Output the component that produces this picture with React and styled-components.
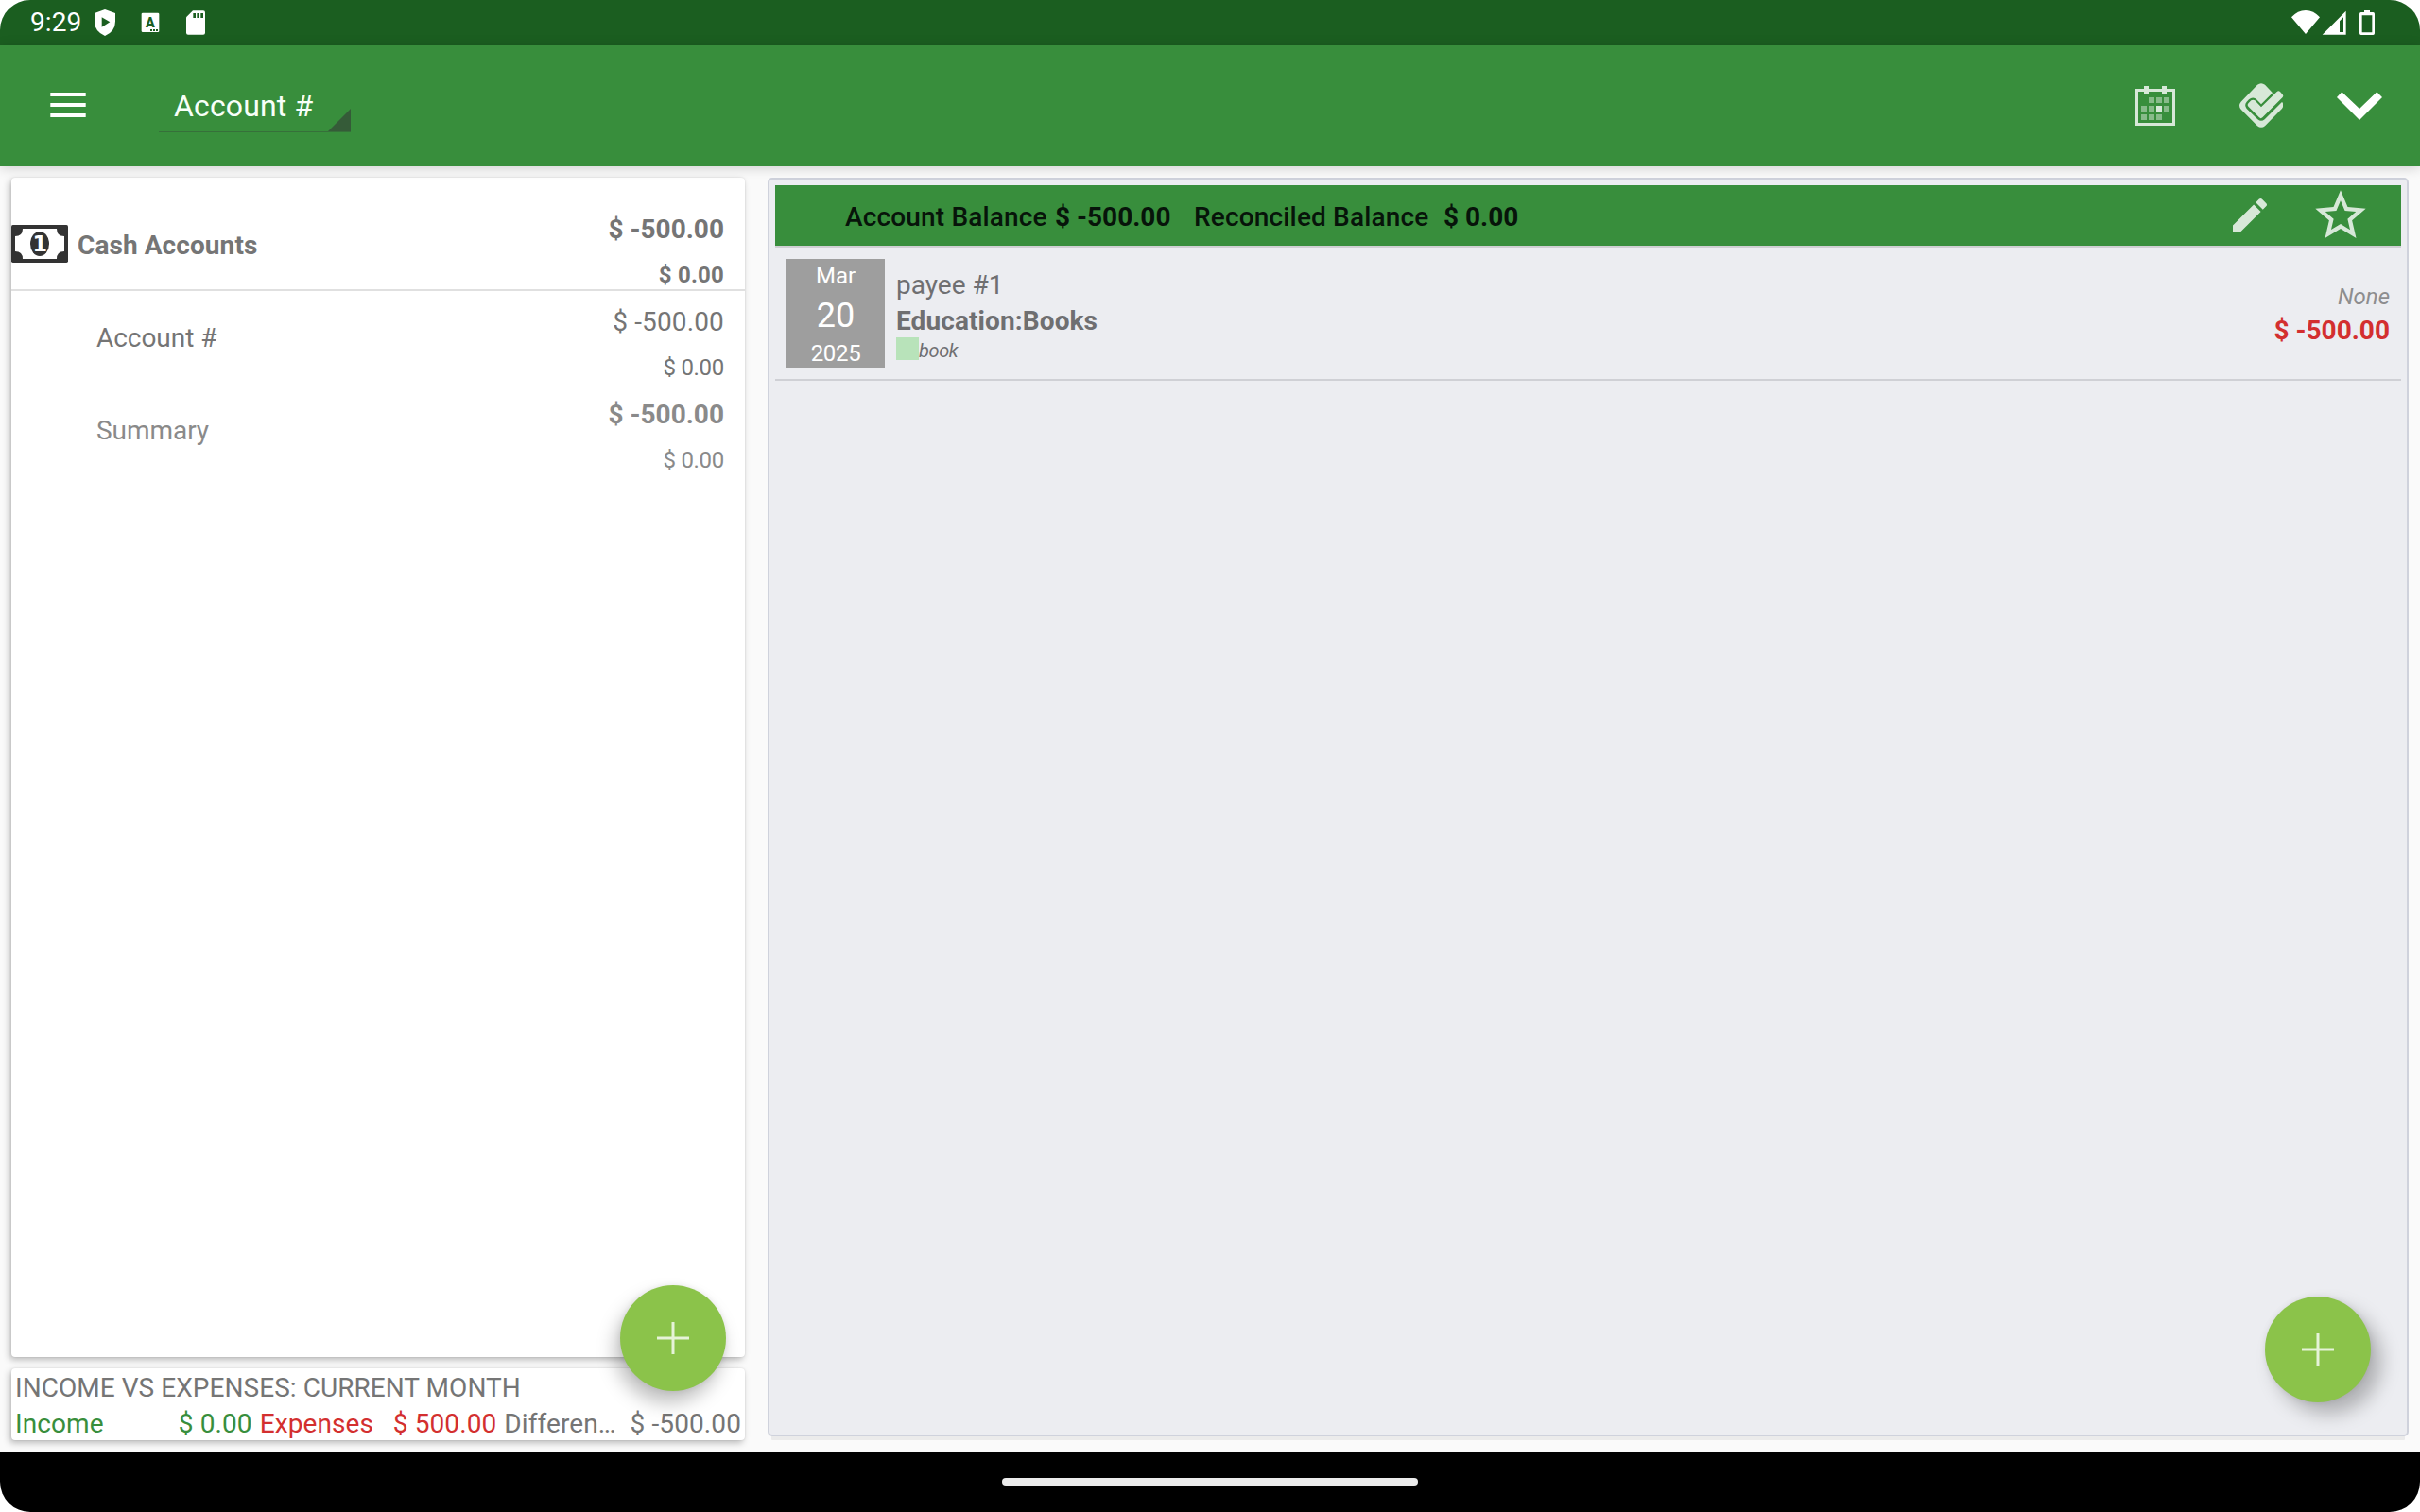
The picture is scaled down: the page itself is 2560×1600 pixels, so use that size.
import React from "react";
import styled, { createGlobalStyle } from "styled-components";

const GlobalStyle = createGlobalStyle`
  * { box-sizing: border-box; }
  html, body { margin: 0; padding: 0; background: #ffffff; }
  body { font-family: Roboto, "Noto Sans", sans-serif; overflow: hidden; }
  svg { display: block; flex: none; }
`;

const Device = styled.div`
  width: 2560px;
  height: 1600px;
  display: flex;
  flex-direction: column;
  border-radius: 32px;
  overflow: hidden;
  background: #fafafa;
`;

const StatusBar = styled.header`
  height: 48px;
  flex: none;
  display: flex;
  justify-content: space-between;
  background: #1b5e20;
  color: #ffffff;
`;

const StatusLeft = styled.div`
  display: flex;
  padding-left: 32px;
`;

const StatusRight = styled.div`
  display: flex;
  padding-right: 48px;
`;

const Clock = styled.span`
  width: 68px;
  padding-top: 7px;
  font-size: 28px;
  line-height: 33px;
  letter-spacing: 0.1px;
`;

const Toolbar = styled.nav`
  height: 128px;
  flex: none;
  display: flex;
  align-items: flex-start;
  background: #388e3c;
  box-shadow: 0 2px 12px rgba(0, 0, 0, 0.17);
  z-index: 1;
`;

const MenuButton = styled.div`
  padding: 50px 0 0 53px;
  width: 168px;
`;

const Spinner = styled.div`
  width: 203px;
  height: 49px;
  margin-top: 43px;
  display: flex;
  justify-content: space-between;
  align-items: flex-end;
  border-bottom: 1px solid #36703a;
`;

const SpinnerText = styled.span`
  padding: 0 0 8px 16px;
  color: #f8fff8;
  font-size: 32px;
  line-height: 38px;
  letter-spacing: 0.15px;
  white-space: nowrap;
`;

const ToolbarActions = styled.div`
  margin-left: auto;
  display: flex;
  padding: 40px 40px 0 0;
`;

const Main = styled.main`
  flex: 1;
  display: flex;
  gap: 24px;
  padding: 12px 12px 12px;
`;

const Sidebar = styled.section`
  position: relative;
  width: 776px;
  display: flex;
  flex-direction: column;
  gap: 12px;
`;

const Card = styled.div`
  background: #ffffff;
  border-radius: 4px;
  box-shadow: -2px 3px 7px rgba(0, 0, 0, 0.26), 0 0 2px rgba(0, 0, 0, 0.12);
`;

const AccountsCard = styled(Card)`
  flex: 1;
  padding-top: 22px;
`;

const AccountRow = styled.div`
  height: 98px;
  display: flex;
  padding-right: 22px;
  color: ${(p) => p.$color || "#757575"};
  border-bottom: ${(p) => (p.$header ? "2px solid #e0e0e0" : "none")};
`;

const BillSlot = styled.div`
  width: 60px;
  padding-top: 28px;
`;

const AccountName = styled.span`
  flex: 1;
  padding-top: 33px;
  padding-left: ${(p) => (p.$header ? "10px" : "90px")};
  font-size: 28px;
  line-height: 33px;
  font-weight: ${(p) => (p.$header ? 700 : 400)};
  letter-spacing: ${(p) => (p.$header ? 0.08 : -0.05)}px;
`;

const Amounts = styled.div`
  display: flex;
  flex-direction: column;
  align-items: flex-end;
  gap: 18px;
  padding-top: 16px;
`;

const Amount = styled.span`
  font-size: ${(p) => (p.$small ? 24 : 28)}px;
  line-height: ${(p) => (p.$small ? 28 : 33)}px;
  font-weight: ${(p) => (p.$bold ? 700 : 400)};
  letter-spacing: ${(p) => (p.$small ? (p.$bold ? 0.2 : -0.3) : p.$bold ? 0 : 0.15)}px;
`;

const SummaryCard = styled(Card)`
  height: 76px;
  flex: none;
  padding-top: 4px;
  color: #757575;
  font-size: 28px;
`;

const SummaryTitle = styled.div`
  height: 38px;
  padding-left: 4px;
  line-height: 33px;
  letter-spacing: 0.05px;
`;

const SummaryColumns = styled.div`
  display: grid;
  grid-template-columns: repeat(3, 1fr);
  line-height: 33px;
`;

const SummaryCell = styled.div`
  min-width: 0;
  display: flex;
  justify-content: space-between;
  padding: 0 4px;
  white-space: nowrap;
  letter-spacing: 0.1px;
  color: ${(p) => p.$color};
`;

const Ledger = styled.section`
  position: relative;
  flex: 1;
  margin-bottom: 4px;
  padding: 6px;
  background: #ecedf1;
  border: 2px solid #cfd2dc;
  border-radius: 5px;
  box-shadow: 0 8px 0 -4px #ebebeb;
`;

const LedgerHeader = styled.div`
  height: 66px;
  display: flex;
  padding: 17px 32px 0 74px;
  background: #388e3c;
  border-bottom: 2px solid #cfcfd3;
  color: #07140a;
  font-size: 28px;
  line-height: 33px;
  white-space: nowrap;
`;

const BalanceLabel = styled.span`
  width: ${(p) => p.$width}px;
  font-weight: 500;
  letter-spacing: 0.16px;
`;

const BalanceValue = styled.span`
  width: ${(p) => p.$width}px;
  font-weight: 700;
`;

const HeaderActions = styled.div`
  margin: -17px 0 0 auto;
  display: flex;
  gap: 40px;
  align-items: center;
  height: 64px;
`;

const Transaction = styled.div`
  height: 141px;
  display: flex;
  padding: 0 12px;
  border-bottom: 2px solid #cfd0d5;
  color: #6f6f71;
`;

const DateTile = styled.div`
  width: 104px;
  height: 115px;
  margin: 12px 12px 0 0;
  padding-top: 4px;
  display: flex;
  flex-direction: column;
  align-items: center;
  background: #9e9e9e;
  color: #ffffff;
  font-size: 24px;
  line-height: 28px;
`;

const Day = styled.span`
  margin: 7px 0 5px;
  font-size: 36px;
  line-height: 42px;
`;

const Year = styled.span`
  letter-spacing: -0.35px;
`;

const Details = styled.div`
  padding-top: 23px;
  display: flex;
  flex-direction: column;
  font-size: 28px;
  line-height: 33px;
`;

const Category = styled.span`
  margin: 5px 0 1px;
  font-weight: 700;
  letter-spacing: 0.1px;
`;

const TagLine = styled.div`
  display: flex;
`;

const Swatch = styled.span`
  width: 24px;
  height: 24px;
  background: #b8e3ba;
`;

const Note = styled.span`
  padding-top: 2px;
  font-size: 20px;
  line-height: 24px;
  font-style: italic;
  letter-spacing: -0.4px;
`;

const TransactionTotals = styled.div`
  margin-left: auto;
  padding-top: 38px;
  display: flex;
  flex-direction: column;
  align-items: flex-end;
  gap: 5px;
`;

const StatusText = styled.span`
  color: #8d8d8f;
  font-size: 24px;
  line-height: 28px;
  font-style: italic;
`;

const NegativeAmount = styled.span`
  color: #d32f2f;
  font-size: 28px;
  line-height: 33px;
  font-weight: 700;
`;

const Fab = styled.button`
  position: absolute;
  right: ${(p) => p.$right}px;
  bottom: ${(p) => p.$bottom}px;
  width: 112px;
  height: 112px;
  padding: 0;
  border: 0;
  border-radius: 50%;
  display: flex;
  align-items: center;
  justify-content: center;
  background: #8bc34a;
  box-shadow: ${(p) => p.$shift}px 12px 20px rgba(0, 0, 0, 0.26), 0 0 6px rgba(0, 0, 0, 0.08);
`;

const NavigationBar = styled.footer`
  height: 64px;
  flex: none;
  display: flex;
  align-items: center;
  justify-content: center;
  background: #000000;
`;

const HomePill = styled.div`
  width: 440px;
  height: 8px;
  border-radius: 4px;
  background: #ebebeb;
`;

const PlusIcon = () => (
  <svg width="34" height="34" viewBox="0 0 34 34">
    <path d="M0 17H34M17 0V34" stroke="#e6f3d8" strokeWidth="3" />
  </svg>
);

const StatusIcons = () => (
  <svg width="120" height="48" viewBox="300 0 360 144" fill="#fff">
    <path d="M333 30L366 42V68Q366 99 333 114Q300 99 300 68V42Z" />
    <path d="M323 55L349 70L323 86Z" fill="#1b5e20" />
    <rect x="449" y="41" width="56" height="61" rx="4" />
    <text x="477" y="87" textAnchor="middle" fontFamily="Roboto" fontWeight="900" fontSize="43" fill="#1b5e20">A</text>
    <path d="M477 93h6v6h-6zM486 93h6v6h-6zM495 93h6v6h-6z" fill="#1b5e20" />
    <path d="M612 34H645Q651 34 651 40V104Q651 110 645 110H597Q591 110 591 104V55Z" />
    <path d="M613 42h8v15h-8zM625 42h8v15h-8zM637 42h8v15h-8z" fill="#1b5e20" />
  </svg>
);

const SignalIcons = () => (
  <svg width="88" height="48" viewBox="672 0 264 144" fill="#fff">
    <path d="M717 108L672 55Q692 33 717 33Q742 33 762 55Z" />
    <path fillRule="evenodd" d="M770 110L845 35V110ZM825 102H837V55L825 67Z" />
    <path fillRule="evenodd" d="M903 33H921V39H931Q936 39 936 44V106Q936 111 931 111H893Q888 111 888 106V44Q888 39 893 39H903ZM896 49V103H928V49Z" />
  </svg>
);

const MenuIcon = () => (
  <svg width="38" height="26" viewBox="0 0 38 26">
    <path d="M0.3 2H37.7M0.3 13H37.7M0.3 24H37.7" stroke="#fff" strokeWidth="4" />
  </svg>
);

const SpinnerCorner = () => (
  <svg width="24" height="24" viewBox="0 0 24 24">
    <path d="M24 0V24H0Z" fill="#355b38" />
  </svg>
);

const DAY_CELLS = [
  [219, 309], [243, 309], [267, 309],
  [195, 336], [219, 336], [267, 336],
  [195, 363], [219, 363], [243, 363],
];

/* Calendar, reconcile mark and chevron share one coordinate space. */
const ActionIcons = () => (
  <svg width="261" height="50" viewBox="177 264 783 150">
    <g fill="#d7e8d8">
      <path fillRule="evenodd" d="M177 282H204V273H219V282H261V273H276V282H303V399H177ZM186 291V390H294V291H276V297H261V291H219V297H204V291Z" />
      {DAY_CELLS.map(([x, y]) => (
        <rect key={`${x}-${y}`} x={x} y={y} width="18" height="18" fill="#88bb8a" />
      ))}
      <rect x="243" y="336" width="18" height="18" />
      <path d="M564 269Q576 260 588 269L612 295L576 331L563 317Q550 304 537 316L530 323Q521 334 530 345L565 379Q576 388 587 379L641 325Q645 323 645 329V338Q645 341 641 346L588 400Q576 409 564 400L512 347Q502 335 512 323Z" />
      <path d="M533 333Q533 330 536 327L544 319Q550 315 556 319L576 340L626 291Q631 286 636 291L644 300Q648 304 644 309L580 373Q575 378 570 373L536 339Q533 336 533 333Z" />
    </g>
    <path d="M816 309L832 292L888 345L943 292L960 309L888 381Z" fill="#fff" />
  </svg>
);

const PencilIcon = () => (
  <svg width="48" height="48" viewBox="0 0 24 24" fill="#d7e8d8">
    <path d="M3 17.25V21h3.75L17.81 9.94l-3.75-3.75L3 17.25zM20.71 7.04c.39-.39.39-1.02 0-1.41l-2.34-2.34c-.39-.39-1.02-.39-1.41 0l-1.83 1.83 3.75 3.75 1.83-1.83z" />
  </svg>
);

const StarIcon = () => (
  <svg width="64" height="64" viewBox="0 0 24 24" fill="#d7e8d8">
    <path d="M22 9.24l-7.19-.62L12 2 9.19 8.63 2 9.24l5.46 4.73L5.82 21 12 17.27 18.18 21l-1.63-7.03L22 9.24zM12 15.4l-3.76 2.27 1-4.28-3.32-2.88 4.38-.38L12 6.1l1.71 4.04 4.38.38-3.32 2.88 1 4.28L12 15.4z" />
  </svg>
);

const BillIcon = () => (
  <svg width="60" height="40" viewBox="0 0 180 120">
    <rect width="180" height="120" rx="5" fill="#333" />
    <path d="M36 12H144Q144 36 168 36V84Q144 84 144 108H36Q36 84 12 84V36Q36 36 36 12Z" fill="#fff" />
    <ellipse cx="90" cy="60" rx="30" ry="39" fill="#333" />
    <text x="91" y="84" textAnchor="middle" fontFamily="DejaVu Sans" fontWeight="700" fontSize="67" fill="#fff">1</text>
  </svg>
);

const ACCOUNTS = [
  { name: "Cash Accounts", total: "$ -500.00", reconciled: "$ 0.00", header: true, bold: true },
  { name: "Account #", total: "$ -500.00", reconciled: "$ 0.00" },
  { name: "Summary", total: "$ -500.00", reconciled: "$ 0.00", bold: true, color: "#8a8a8a" },
];

const SUMMARY = [
  { label: "Income", value: "$ 0.00", color: "#388e3c" },
  { label: "Expenses", value: "$ 500.00", color: "#d32f2f" },
  { label: "Differen…", value: "$ -500.00", color: "#757575" },
];

export default function App() {
  return (
    <>
      <GlobalStyle />
      <Device>
        <StatusBar>
          <StatusLeft>
            <Clock>9:29</Clock>
            <StatusIcons />
          </StatusLeft>
          <StatusRight>
            <SignalIcons />
          </StatusRight>
        </StatusBar>
        <Toolbar>
          <MenuButton>
            <MenuIcon />
          </MenuButton>
          <Spinner>
            <SpinnerText>Account #</SpinnerText>
            <SpinnerCorner />
          </Spinner>
          <ToolbarActions>
            <ActionIcons />
          </ToolbarActions>
        </Toolbar>
        <Main>
          <Sidebar>
            <AccountsCard>
              {ACCOUNTS.map((a) => (
                <AccountRow key={a.name} $header={a.header} $color={a.color}>
                  {a.header && (
                    <BillSlot>
                      <BillIcon />
                    </BillSlot>
                  )}
                  <AccountName $header={a.header}>{a.name}</AccountName>
                  <Amounts>
                    <Amount $bold={a.bold}>{a.total}</Amount>
                    <Amount $small $bold={a.header}>{a.reconciled}</Amount>
                  </Amounts>
                </AccountRow>
              ))}
            </AccountsCard>
            <SummaryCard>
              <SummaryTitle>INCOME VS EXPENSES: CURRENT MONTH</SummaryTitle>
              <SummaryColumns>
                {SUMMARY.map((s) => (
                  <SummaryCell key={s.label} $color={s.color}>
                    <span>{s.label}</span>
                    <span>{s.value}</span>
                  </SummaryCell>
                ))}
              </SummaryColumns>
            </SummaryCard>
            <Fab $right={20} $bottom={52} $shift={-5}>
              <PlusIcon />
            </Fab>
          </Sidebar>
          <Ledger>
            <LedgerHeader>
              <BalanceLabel $width={222}>Account Balance</BalanceLabel>
              <BalanceValue $width={147}>$ -500.00</BalanceValue>
              <BalanceLabel $width={264}>Reconciled Balance</BalanceLabel>
              <BalanceValue $width={90}>$ 0.00</BalanceValue>
              <HeaderActions>
                <PencilIcon />
                <StarIcon />
              </HeaderActions>
            </LedgerHeader>
            <Transaction>
              <DateTile>
                <span>Mar</span>
                <Day>20</Day>
                <Year>2025</Year>
              </DateTile>
              <Details>
                <span>payee #1</span>
                <Category>Education:Books</Category>
                <TagLine>
                  <Swatch />
                  <Note>book</Note>
                </TagLine>
              </Details>
              <TransactionTotals>
                <StatusText>None</StatusText>
                <NegativeAmount>$ -500.00</NegativeAmount>
              </TransactionTotals>
            </Transaction>
            <Fab $right={38} $bottom={34} $shift={11}>
              <PlusIcon />
            </Fab>
          </Ledger>
        </Main>
        <NavigationBar>
          <HomePill />
        </NavigationBar>
      </Device>
    </>
  );
}
